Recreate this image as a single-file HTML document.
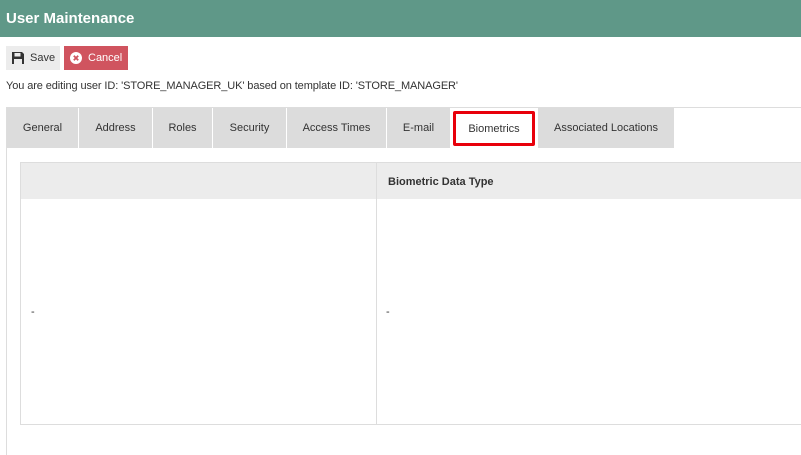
<!DOCTYPE html>
<html><head><style>
body{margin:0;width:801px;height:455px;overflow:hidden;background:#fff;font-family:"Liberation Sans",sans-serif;font-size:11px;color:#333;position:relative}
.hd{position:absolute;left:0;top:0;width:801px;height:37px;background:#5f9888;color:#fff;font-weight:bold;font-size:15px;line-height:37px;padding-left:6px;box-sizing:border-box}
.btn{position:absolute;top:46px;height:24px;line-height:25px;font-size:11px}
.abs{position:absolute}
.tab{position:absolute;top:108px;height:40px;line-height:41px;background:#dcdcdc;text-align:center;font-size:11px;color:#333}
</style></head><body>
<div class="hd">User Maintenance</div>
<div class="btn" style="left:6px;width:54px;background:#ececec">
<svg class="abs" style="left:6px;top:6px" width="12" height="12" viewBox="0 0 12 12"><path d="M0 0H10L12 2V12H0Z" fill="#333"/><rect x="2.5" y="1" width="6" height="3.5" fill="#ececec"/><rect x="2" y="7" width="8" height="5" fill="#ececec"/></svg>
<span class="abs" style="left:24px">Save</span></div>
<div class="btn" style="left:64px;width:64px;background:#d0545f;color:#fff">
<svg class="abs" style="left:6px;top:6px" width="12" height="12" viewBox="0 0 12 12"><circle cx="6" cy="6" r="6" fill="#fff"/><path d="M3.8 3.8L8.2 8.2M8.2 3.8L3.8 8.2" stroke="#d0545f" stroke-width="1.8"/></svg>
<span class="abs" style="left:24px">Cancel</span></div>
<div class="abs" style="left:6px;top:80px;letter-spacing:-0.1px">You are editing user ID: 'STORE_MANAGER_UK' based on template ID: 'STORE_MANAGER'</div>
<div class="abs" style="left:6px;top:107px;width:795px;height:1px;background:#ddd"></div>
<div class="abs" style="left:6px;top:108px;width:1px;height:347px;background:#ddd"></div>
<div class="tab" style="left:7px;width:71px">General</div>
<div class="tab" style="left:79px;width:73px">Address</div>
<div class="tab" style="left:153px;width:59px">Roles</div>
<div class="tab" style="left:213px;width:73px">Security</div>
<div class="tab" style="left:287px;width:99px">Access Times</div>
<div class="tab" style="left:387px;width:63px">E-mail</div>
<div class="tab" style="left:451px;width:86px;background:#fff"><div class="abs" style="left:2px;top:3px;width:76px;height:29px;border:3px solid #e8000b;border-radius:2px;line-height:30px">Biometrics</div></div>
<div class="tab" style="left:538px;width:136px">Associated Locations</div>
<div class="abs" style="left:20px;top:162px;width:781px;height:261px;border:1px solid #ddd;border-right:none"></div>
<div class="abs" style="left:21px;top:163px;width:780px;height:36px;background:#ececec"></div>
<div class="abs" style="left:376px;top:163px;width:1px;height:261px;background:#ddd"></div>
<div class="abs" style="left:388px;top:176px;font-weight:bold">Biometric Data Type</div>
<div class="abs" style="left:31px;top:306px">-</div>
<div class="abs" style="left:386px;top:306px">-</div>
</body></html>
